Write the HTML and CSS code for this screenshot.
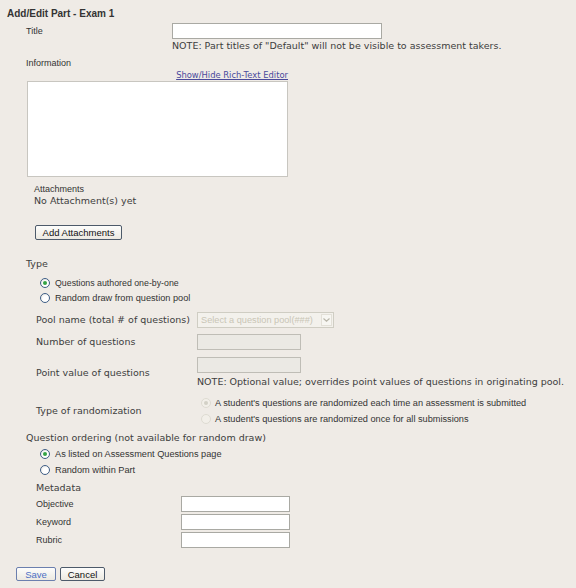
FILE: index.html
```html
<!DOCTYPE html>
<html>
<head>
<meta charset="utf-8">
<link rel="stylesheet" href="styles.css">
</head>
<body>
<div class="page">
  <h1 class="heading">Add/Edit Part - Exam 1</h1>

  <div class="title-row">
    <div class="lbl tah title-lbl">Title</div>
    <div class="title-ctl">
      <div class="textbox title-input"></div>
      <div class="note verd">NOTE: Part titles of "Default" will not be visible to assessment takers.</div>
    </div>
  </div>

  <div class="lbl tah info-lbl">Information</div>
  <div class="editor">
    <div class="editor-link"><a class="link">Show/Hide Rich-Text Editor</a></div>
    <div class="editor-box"></div>
  </div>

  <div class="attach">
    <div class="tah attach-lbl">Attachments</div>
    <div class="verd">No Attachment(s) yet</div>
  </div>
  <div class="attach-btn"><span class="btn">Add Attachments</span></div>

  <div class="lbl verd type-lbl">Type</div>
  <div class="radios type-radios opt">
    <div class="radio-row"><span class="radio checked"></span>Questions authored one-by-one</div>
    <div class="radio-row"><span class="radio"></span>Random draw from question pool</div>
  </div>

  <div class="pool verd">
    <div class="pool-row pool-name">
      <div class="pool-lbl">Pool name (total # of questions)</div>
      <div class="select tah"><span class="select-text">Select a question pool(###)</span><span class="select-arrow"><svg width="7" height="4" viewBox="0 0 7 4"><path d="M0.5 0.5 L3.5 3.2 L6.5 0.5" fill="none" stroke="#b9b6aa" stroke-width="1.2"/></svg></span></div>
    </div>
    <div class="pool-row pool-num">
      <div class="pool-lbl">Number of questions</div>
      <div class="textbox disabled"></div>
    </div>
    <div class="pool-row pool-point">
      <div class="pool-lbl">Point value of questions</div>
      <div>
        <div class="textbox disabled"></div>
        <div class="note">NOTE: Optional value; overrides point values of questions in originating pool.</div>
      </div>
    </div>
    <div class="pool-row pool-rand">
      <div class="pool-lbl">Type of randomization</div>
      <div class="opt rand-radios">
        <div class="radio-row"><span class="radio dis checked"></span>A student's questions are randomized each time an assessment is submitted</div>
        <div class="radio-row"><span class="radio dis"></span>A student's questions are randomized once for all submissions</div>
      </div>
    </div>
  </div>

  <div class="lbl verd order-lbl">Question ordering (not available for random draw)</div>
  <div class="radios order-radios opt">
    <div class="radio-row"><span class="radio checked"></span>As listed on Assessment Questions page</div>
    <div class="radio-row"><span class="radio"></span>Random within Part</div>
  </div>

  <div class="meta">
    <div class="verd meta-head">Metadata</div>
    <div class="meta-row"><div class="tah meta-lbl">Objective</div><div class="textbox meta-input"></div></div>
    <div class="meta-row"><div class="tah meta-lbl">Keyword</div><div class="textbox meta-input"></div></div>
    <div class="meta-row"><div class="tah meta-lbl">Rubric</div><div class="textbox meta-input"></div></div>
  </div>

  <div class="actions">
    <span class="btn save">Save</span>
    <span class="btn cancel">Cancel</span>
  </div>
</div>
</body>
</html>
```

FILE: styles.css
```css
html, body {
  margin: 0;
  padding: 0;
  background: #efebe6;
}
body {
  color: #333;
  font-family: "Liberation Sans", Arial, sans-serif;
  font-size: 8.5px;
}
.page {
  width: 576px;
  height: 588px;
  overflow: hidden;
}
.tah {
  font-family: "Liberation Sans", Arial, sans-serif;
  font-size: 9px;
}
.opt {
  font-family: "Liberation Sans", Arial, sans-serif;
  font-size: 9.2px;
}
.type-radios .radio-row:first-child {
  font-size: 8.8px;
}
.verd {
  font-family: "DejaVu Sans", Verdana, sans-serif;
  font-size: 9.5px;
  line-height: 12px;
  color: #3d3d3d;
}
.heading {
  margin: 7px 0 0 7px;
  font-size: 10px;
  line-height: 13px;
  font-weight: bold;
  color: #333;
  font-family: "Liberation Sans", Arial, sans-serif;
}
.title-row {
  display: grid;
  grid-template-columns: 146px 210px;
  margin: 3px 0 0 26px;
}
.title-lbl {
  line-height: 16px;
}
.textbox {
  box-sizing: border-box;
  background: #fff;
  border: 1px solid #a9a9a3;
  height: 16px;
}
.title-input {
  width: 210px;
}
.note {
  font-family: "DejaVu Sans", Verdana, sans-serif;
  font-size: 9.5px;
  line-height: 12px;
  margin-top: 1px;
  white-space: nowrap;
  color: #3d3d3d;
}
.info-lbl {
  margin: 5px 0 0 26px;
  line-height: 12px;
}
.editor {
  margin-left: 27px;
  width: 261px;
}
.editor-link {
  text-align: right;
  line-height: 12px;
  height: 12px;
}
.link {
  font-family: "DejaVu Sans", Verdana, sans-serif;
  font-size: 8.4px;
  color: #4a4a9c;
  text-decoration: underline;
}
.editor-box {
  box-sizing: border-box;
  height: 96px;
  background: #fff;
  border: 1px solid #c8c6c0;
}
.attach {
  margin: 7px 0 0 34px;
  line-height: 11px;
}
.attach .verd {
  line-height: 11px;
}
.attach-btn {
  margin: 19px 0 0 35px;
  height: 15px;
}
.btn {
  display: inline-flex;
  align-items: center;
  justify-content: center;
  box-sizing: border-box;
  height: 15px;
  border: 1px solid #4d5a6a;
  border-radius: 2px;
  background: linear-gradient(#fdfdfc, #ece9e1);
  font-family: "Liberation Sans", Arial, sans-serif;
  font-size: 9.5px;
  color: #111;
  vertical-align: top;
}
.attach-btn .btn {
  width: 87px;
}
.type-lbl {
  margin: 18px 0 0 26px;
  line-height: 12px;
}
.radios {
  margin: 5px 0 0 40px;
}
.radio-row {
  display: flex;
  align-items: center;
  height: 15px;
  white-space: nowrap;
}
.radio {
  box-sizing: border-box;
  width: 10px;
  height: 10px;
  border-radius: 50%;
  border: 1px solid #3f5e86;
  background: radial-gradient(circle at 60% 60%, #fff 0, #fff 40%, #dcdcd6 100%);
  margin-right: 5px;
  display: inline-flex;
  align-items: center;
  justify-content: center;
  flex: none;
}
.radio.checked::after {
  content: "";
  width: 4px;
  height: 4px;
  border-radius: 50%;
  background: #35a344;
}
.radio.dis {
  border-color: #dedbd2;
  background: #f2efe9;
  margin-right: 4px;
}
.radio.dis.checked::after {
  background: #d3d0c6;
}
.pool {
  margin: 7px 0 0 36px;
}
.pool-row {
  display: grid;
  grid-template-columns: 161px auto;
  align-items: center;
}
.pool-lbl {
  white-space: nowrap;
}
.select {
  box-sizing: border-box;
  width: 137px;
  height: 16px;
  border: 1px solid #cfcdc3;
  background: #f3f1ec;
  display: flex;
  align-items: center;
  color: #c9c5b6;
  font-size: 9.2px;
}
.select-text {
  flex: 1;
  padding-left: 3px;
  white-space: nowrap;
}
.select-arrow {
  width: 11px;
  height: 12px;
  margin-right: 1px;
  border: 1px solid #e3e0d8;
  display: flex;
  align-items: center;
  justify-content: center;
  background: #f7f6f2;
  box-sizing: border-box;
}
.textbox.disabled {
  width: 104px;
  background: #ebe9e4;
  border-color: #bfbdb6;
}
.pool-num {
  margin-top: 6px;
}
.pool-point {
  margin-top: 7px;
}
.pool-point .note {
  margin-top: 3px;
}
.pool-rand {
  margin-top: 7px;
}
.rand-radios {
  margin-left: 4px;
  color: #333;
}
.rand-radios .radio-row {
  height: 16px;
}
.order-lbl {
  margin: 5px 0 0 26px;
  line-height: 12px;
}
.order-radios {
  margin-top: 2px;
}
.order-radios .radio-row {
  height: 16px;
}
.meta {
  margin: 4px 0 0 36px;
}
.meta-head {
  line-height: 12px;
  margin-bottom: 2px;
}
.meta-row {
  display: grid;
  grid-template-columns: 145px 109px;
  align-items: center;
  margin-bottom: 2px;
}
.meta-lbl {
  line-height: 16px;
}
.meta-input {
  width: 109px;
}
.actions {
  margin: 19px 0 0 16px;
  display: flex;
  gap: 4px;
}
.btn.save {
  width: 40px;
  height: 14px;
  color: #4d6fc4;
  border-color: #6b7fae;
}
.btn.cancel {
  width: 45px;
  height: 14px;
}
```
